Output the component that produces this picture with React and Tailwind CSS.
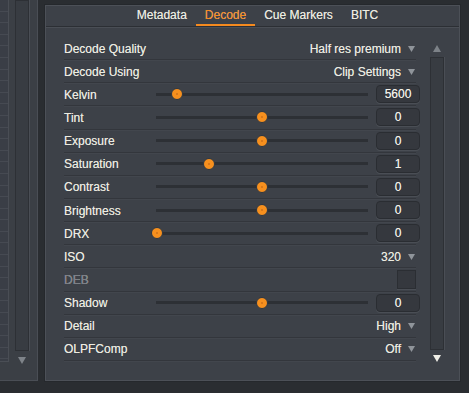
import React from "react";

const Tri = ({ up = false, color = "#8f949a", w = 7, h = 6 }) => (
  <svg width={w} height={h} viewBox="0 0 7 6" className="block">
    <path d={up ? "M0 6H7L3.5 0Z" : "M0 0H7L3.5 6Z"} fill={color} />
  </svg>
);

const rows = [
  { label: "Decode Quality", type: "dd", value: "Half res premium" },
  { label: "Decode Using", type: "dd", value: "Clip Settings" },
  { label: "Kelvin", type: "slider", pos: 0.1, value: "5600" },
  { label: "Tint", type: "slider", pos: 0.5, value: "0" },
  { label: "Exposure", type: "slider", pos: 0.5, value: "0" },
  { label: "Saturation", type: "slider", pos: 0.25, value: "1" },
  { label: "Contrast", type: "slider", pos: 0.5, value: "0" },
  { label: "Brightness", type: "slider", pos: 0.5, value: "0" },
  { label: "DRX", type: "slider", pos: 0.005, value: "0" },
  { label: "ISO", type: "dd", value: "320" },
  { label: "DEB", type: "check", disabled: true },
  { label: "Shadow", type: "slider", pos: 0.5, value: "0" },
  { label: "Detail", type: "dd", value: "High" },
  { label: "OLPFComp", type: "dd", value: "Off" },
];

function Row({ r }) {
  return (
    <div className="flex items-center h-[23.15px] border-b border-[#33363c] shadow-[0_1px_0_#42464d]">
      <div
        className={
          "w-[92px] shrink-0 whitespace-nowrap pt-[1px] " +
          (r.disabled ? "text-[#7c8086]" : "text-[#ecebe1]")
        }
      >
        {r.label}
      </div>
      {r.type === "slider" && (
        <>
          <div className="relative w-[212px] h-[3px] bg-[#2d3035] shrink-0">
            <div
              className="absolute top-1/2 w-[12px] h-[12px] -translate-x-1/2 -translate-y-1/2 rounded-full bg-[#f7901e] border border-[#2b3644] flex items-center justify-center"
              style={{ left: `${r.pos * 100}%` }}
            >
              <div className="w-[2px] h-[2px] rounded-full bg-[#d0721a]" />
            </div>
          </div>
          <div className="ml-[8px] mr-[-4px] w-[44px] h-[18px] shrink-0 rounded-[4px] bg-[#35383e] border border-[#2a2d32] shadow-[0_1px_0_#4a4e55] flex items-center justify-center text-[#f2f1ea]">
            {r.value}
          </div>
        </>
      )}
      {r.type === "dd" && (
        <div className="ml-auto flex items-center gap-[7px] text-[#ecebe1] mr-[1px] pt-[1px]">
          <span>{r.value}</span>
          <Tri />
        </div>
      )}
      {r.type === "check" && (
        <div className="ml-auto w-[19px] h-[19px] bg-[#35383e] border border-[#2b2e33] shadow-[0_1px_0_#4a4e55]" />
      )}
    </div>
  );
}

export default function App() {
  return (
    <div
      className="w-[469px] h-[393px] bg-[#2a2d31] flex items-start overflow-hidden text-[12px] leading-none [text-shadow:0_0_0.4px_rgba(236,235,225,0.7)]"
      style={{ fontFamily: '"Liberation Sans", Arial, sans-serif' }}
    >
      {/* left panel */}
      <div className="w-[38px] h-[381px] shrink-0 bg-[#3b3f45] border-r border-b border-[#4a4e55] flex items-start">
        <div className="w-[9px] h-[362px] bg-[#3a3e46] border-r border-b border-[#4a4e55] flex flex-col">
          {Array.from({ length: 31 }).map((_, i) => (
            <div key={i} className="h-[11.6px] shrink-0 border-b border-[#464a52]" />
          ))}
        </div>
        <div className="ml-[6px] flex flex-col items-center">
          <div className="w-[14px] h-[351px] bg-[#383c42] border border-[#2d3035] shadow-[1px_0_0_#4a4e55]" />
          <div className="mt-[6px]">
            <Tri color="#7f848a" w={8} h={7} />
          </div>
        </div>
      </div>

      {/* main panel */}
      <div className="ml-[7px] mt-[5px] w-[415px] h-[376px] shrink-0 bg-[#3d4148] border border-[#4c5057] shadow-[0_0_0_1px_#25282c] flex flex-col">
        <div className="h-[21px] shrink-0 border-b border-[#2c2f34] shadow-[0_1px_0_#4a4e55] flex items-end justify-center pl-[10px]">
          {["Metadata", "Decode", "Cue Markers", "BITC"].map((t) => (
            <div
              key={t}
              className={
                "h-full px-[9px] flex items-center whitespace-nowrap border-b-2 " +
                (t === "Decode"
                  ? "text-[#f58a1f] border-[#f58a1f]"
                  : "text-[#ecebe1] border-transparent")
              }
            >
              {t}
            </div>
          ))}
        </div>
        <div className="flex pt-[10px] pl-[18px]">
          <div className="w-[352px] shrink-0 flex flex-col">
            {rows.map((r) => (
              <Row key={r.label} r={r} />
            ))}
          </div>
          <div className="ml-[14px] flex flex-col items-center">
            <div className="mt-[8px]">
              <Tri up color="#7d8288" w={8} h={7} />
            </div>
            <div className="mt-[5px] w-[14px] h-[293px] bg-[#383c42] border border-[#2d3035] shadow-[1px_0_0_#4a4e55]" />
            <div className="mt-[5px]">
              <Tri color="#f0efe8" w={8} h={7} />
            </div>
          </div>
        </div>
      </div>
    </div>
  );
}
